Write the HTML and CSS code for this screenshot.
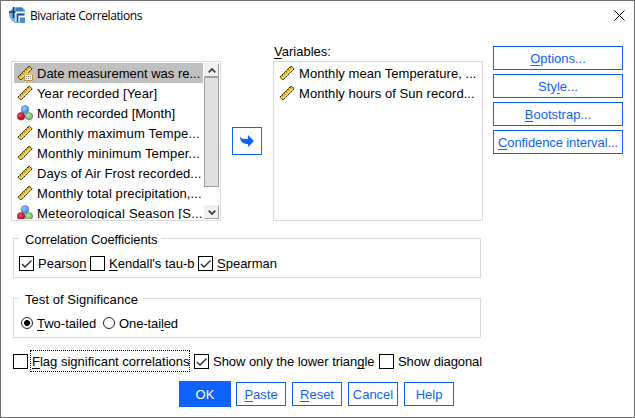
FILE: index.html
```html
<!DOCTYPE html>
<html lang="en">
<head>
<meta charset="utf-8">
<title>Bivariate Correlations</title>
<link rel="stylesheet" href="styles.css">
</head>
<body>
<svg width="0" height="0" class="defs">
  <defs>
    <symbol id="ruler" viewBox="0 0 16 16">
      <path d="M.8 12.200 12 1l3.200 2.800L4 15z" fill="#ffc91f" stroke="#2a2718" stroke-width="1" stroke-dasharray="2 .5"/>
      <path d="M3 10.300l1.300 1.200M5 8.300l1.300 1.200M7 6.300l1.300 1.200M9 4.300l1.300 1.200M11 2.300l1.300 1.200" stroke="#5a4a18" stroke-width=".9"/>
      <path d="M3.900 13.200 13.600 3.800" stroke="#ffe28a" stroke-width="1"/>
    </symbol>
    <symbol id="date" viewBox="0 0 16 16">
      <use href="#ruler" width="16" height="16"/>
      <path d="M7.500 8.500h8v7h-8z" fill="#fff8c8" stroke="#b49a36"/>
      <path d="M7 8h9v2H7z" fill="#e5c64f"/>
      <path d="M9 11.500h5M9 13.500h5" stroke="#777" stroke-dasharray="1 1"/>
    </symbol>
    <radialGradient id="blue" cx=".4" cy=".35"><stop offset="0" stop-color="#9ccaff"/><stop offset="1" stop-color="#4f93e4"/></radialGradient>
    <radialGradient id="red" cx=".4" cy=".35"><stop offset="0" stop-color="#ee5060"/><stop offset="1" stop-color="#b8162a"/></radialGradient>
    <radialGradient id="green" cx=".4" cy=".35"><stop offset="0" stop-color="#c2edb0"/><stop offset="1" stop-color="#77b96c"/></radialGradient>
    <symbol id="nominal" viewBox="0 0 16 16">
      <circle cx="8" cy="4.500" r="3.900" fill="url(#blue)" stroke="#5587c6" stroke-width=".6"/>
      <circle cx="4.100" cy="11.300" r="3.800" fill="url(#red)" stroke="#a51c2e" stroke-width=".6"/>
      <circle cx="12" cy="11.300" r="3.700" fill="url(#green)" stroke="#4d8649" stroke-width=".6"/>
    </symbol>
  </defs>
</svg>
<main class="dialog">
  <header class="titlebar">
    <svg class="app-icon" viewBox="0 0 16 16">
      <path d="M1 4Q4 0 8 0h5l3 3v13H6Q0 12 0 7z" fill="#78acd8"/>
      <path d="M7 1h6l2 3H7z" fill="#3a7fbc"/>
      <path d="M0 5h7M4.500 0v11" stroke="#12366f" stroke-width="1.500"/>
      <path d="M7 15V5.500h9M10 15V9.500h6" fill="none" stroke="#fff" stroke-width="1.300"/>
      <path d="M8.500 15V7.500H15" fill="none" stroke="#174c8d" stroke-width="1.500"/>
      <path d="M11 11h5v5h-5z" fill="#4b91d0"/>
    </svg>
    <h1 class="title">Bivariate Correlations</h1>
    <svg class="close" viewBox="0 0 11 11"><path d="M.5.5l10 10M10.500.5l-10 10" stroke="#000" stroke-width="1"/></svg>
  </header>
  <section class="upper">
    <div class="list source">
      <ul class="items">
        <li class="selected"><svg><use href="#date"/></svg><span>Date measurement was re...</span></li>
        <li><svg><use href="#ruler"/></svg><span class="wide">Year recorded [Year]</span></li>
        <li><svg><use href="#nominal"/></svg><span>Month recorded [Month]</span></li>
        <li><svg><use href="#ruler"/></svg><span class="wider">Monthly maximum Tempe...</span></li>
        <li><svg><use href="#ruler"/></svg><span class="wider">Monthly minimum Temper...</span></li>
        <li><svg><use href="#ruler"/></svg><span class="wide">Days of Air Frost recorded...</span></li>
        <li><svg><use href="#ruler"/></svg><span class="wide">Monthly total precipitation,...</span></li>
        <li><svg><use href="#nominal"/></svg><span class="widest">Meteorological Season [S...</span></li>
      </ul>
      <div class="scrollbar">
        <div class="scroll-btn"><svg viewBox="0 0 8 5"><path d="M.7 4.300 4 1l3.300 3.300"/></svg></div>
        <div class="thumb"></div>
        <div class="scroll-btn end"><svg viewBox="0 0 8 5"><path d="M.7.7 4 4 7.300.7"/></svg></div>
      </div>
    </div>
    <button class="move"><svg viewBox="0 0 14 12"><path d="M0 1c1 3 3 3 8 3V0l6 6-6 6V9C3 9 0 7 0 1z" fill="#0f62fe"/></svg></button>
    <div class="target">
      <div class="target-label"><u>V</u>ariables:</div>
      <div class="list">
        <ul class="items">
          <li><svg><use href="#ruler"/></svg><span class="slight">Monthly mean Temperature, ...</span></li>
          <li><svg><use href="#ruler"/></svg><span class="slight">Monthly hours of Sun record...</span></li>
        </ul>
      </div>
    </div>
    <nav class="side">
      <button><span><u>O</u>ptions...</span></button>
      <button><span>Sty<u>l</u>e...</span></button>
      <button><span><u>B</u>ootstrap...</span></button>
      <button><span class="narrow"><u>C</u>onfidence interval...</span></button>
    </nav>
  </section>
  <section class="group coefficients">
    <h2 class="narrow">Correlation Coefficients</h2>
    <div class="options">
      <label class="c1"><svg class="box"><path d="M3 7.500l3 3L12.500 4"/></svg><span>Pearso<u>n</u></span></label>
      <label class="c2"><svg class="box"></svg><span><u>K</u>endall's tau-b</span></label>
      <label><svg class="box"><path d="M3 7.500l3 3L12.500 4"/></svg><span><u>S</u>pearman</span></label>
    </div>
  </section>
  <section class="group significance">
    <h2 class="slight">Test of Significance</h2>
    <div class="options">
      <label class="r1"><i class="radio on"></i><span><u>T</u>wo-tailed</span></label>
      <label><i class="radio"></i><span class="narrow">One-tai<u>l</u>ed</span></label>
    </div>
  </section>
  <section class="flags">
    <label class="f1"><svg class="box"></svg><span class="focus"><u>F</u>lag significant correlations</span></label>
    <label class="f2"><svg class="box"><path d="M3 7.500l3 3L12.500 4"/></svg><span class="narrow-slight">Show only the lower trian<u>g</u>le</span></label>
    <label><svg class="box"></svg><span class="narrow">Show diagonal</span></label>
  </section>
  <footer class="actions">
    <button class="primary"><span>OK</span></button>
    <button><span><u>P</u>aste</span></button>
    <button><span><u>R</u>eset</span></button>
    <button><span>Cancel</span></button>
    <button><span>Help</span></button>
  </footer>
</main>
</body>
</html>
```

FILE: styles.css
```css
* { box-sizing: border-box; }
body { margin: 0; font: 13px/18px "Liberation Sans", Arial, sans-serif; color: #000; }
.defs { position: absolute; }
.dialog { width: 635px; height: 418px; border: 1px solid #6f6f6f; background: #fff; display: flex; flex-direction: column; }
.titlebar { height: 44px; flex: none; display: flex; align-items: flex-start; padding: 6px 9px 0 8px; }
.app-icon { width: 16px; height: 16px; }
.title { margin: -1px auto 0 5px; font: 12px/20px "Open Sans", sans-serif; letter-spacing: -.4px; }
.close { width: 11px; height: 11px; margin-top: 3px; }
.upper { height: 175px; flex: none; display: flex; align-items: flex-start; padding-left: 10px; }
.list { width: 210px; height: 160px; border: 1px solid #dcdcdc; display: flex; overflow: hidden; padding: 1px 0 1px 2px; }
.source { margin-top: 16px; }
.items { list-style: none; margin: 0; padding: 0; width: 189px; height: 156px; overflow: hidden; }
.items li { height: 20px; display: flex; align-items: center; padding-left: 3px; white-space: nowrap; }
.items svg { width: 16px; height: 16px; flex: none; margin-right: 4px; }
li > span, label > span, button > span { padding-top: 2px; }
.selected { background: #c0c0c0; }
.scrollbar { width: 15px; height: 156px; margin-left: 1px; background: #fff; display: flex; flex-direction: column; }
.scroll-btn { height: 14px; background: #f0f0f0; border: 1px solid #f0f0f0; border-right-color: #a0a0a0; border-bottom-color: #a0a0a0; display: flex; align-items: center; justify-content: center; }
.scroll-btn svg { width: 8px; height: 5px; fill: none; stroke: #404040; stroke-width: 1.8; }
.thumb { height: 110px; background: #e0e0e0; border: 1px solid #a0a0a0; }
.end { margin-top: auto; }
button { font: inherit; margin: 0; padding: 0; border: 1px solid #0f62fe; background: #fff; color: #0f62fe; height: 24px; display: flex; align-items: center; justify-content: center; white-space: nowrap; }
u { text-decoration: underline; text-decoration-thickness: 1px; text-underline-offset: 2px; text-decoration-skip-ink: none; }
.narrow { letter-spacing: -.1px; }
.narrow-slight { letter-spacing: -.04px; }
.slight { letter-spacing: .05px; }
.wide { letter-spacing: .09px; }
.wider { letter-spacing: .17px; }
.widest { letter-spacing: .25px; }
.move { width: 30px; height: 28px; margin: 82px 11px 0; }
.move svg { width: 14px; height: 12px; }
.target-label { height: 16px; line-height: 14px; padding-left: 1px; }
.target .items { width: 206px; }
.side { width: 130px; margin-left: 10px; margin-top: 1px; display: grid; gap: 4px; }
.group { position: relative; width: 468px; height: 40px; flex: none; margin-left: 12px; border: 1px solid #dcdcdc; }
.coefficients { margin-top: 18px; }
.significance { margin-top: 20px; }
.group h2 { position: absolute; left: 5px; top: -8px; margin: 0; padding: 0 4px 0 6px; font: inherit; line-height: 18px; background: #fff; white-space: nowrap; }
.options { display: flex; padding: 14px 0 0 5px; }
label { display: flex; align-items: center; white-space: nowrap; height: 20px; }
.box { width: 15px; height: 15px; border: 1px solid #000; margin-right: 4px; flex: none; fill: none; stroke: #222; stroke-width: 1.3; overflow: hidden; }
.box path { transform: translate(-1px, -.5px); }
.c1 { width: 71px; }
.c2 { width: 108px; }
.r1 { width: 82px; }
.radio { width: 12px; height: 12px; border: 1px solid #222; border-radius: 50%; margin: 0 4px 0 2px; }
.on { background: radial-gradient(circle, #000 0 2.6px, #fff 3.2px); }
.flags { height: 24px; flex: none; display: flex; align-items: center; margin: 11px 0 0 12px; }
.f1 { width: 181px; }
.f2 { width: 185px; }
.f1 .box { margin-right: 2px; }
.focus { width: 160px; height: 22px; border: 1px dotted #000; padding-left: 1px; }
.actions { display: flex; align-items: center; height: 26px; flex: none; gap: 6px; margin: 8px 0 0 178px; }
.actions button { width: 50px; }
.actions .primary { width: 52px; height: 26px; color: #fff; background: #0f62fe; margin-right: -1px; }
```
